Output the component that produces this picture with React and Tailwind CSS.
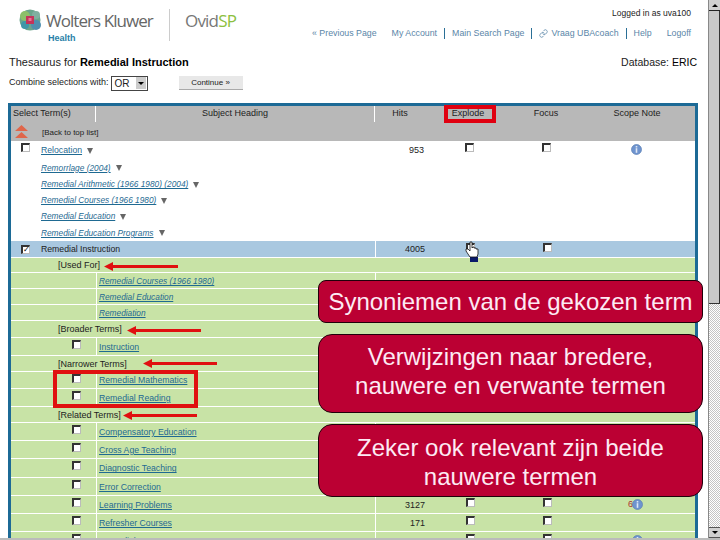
import React from 'react';
import { Link } from 'lucide-react';

const sans = { fontFamily: '"Liberation Sans", Arial, sans-serif' };
const logoFont = { fontFamily: '"Open Sans", sans-serif' };

const Checkbox = ({ checked }) => (
  <span className="inline-flex w-[9px] h-[9px] border-t-2 border-l-2 border-t-[#333] border-l-[#333] border-r border-b border-r-[#bbb] border-b-[#bbb] bg-white items-center justify-center text-[8px] leading-none text-black">
    {checked ? '✓' : null}
  </span>
);

const InfoIcon = () => (
  <svg width="11" height="11" viewBox="0 0 11 11">
    <circle cx="5.5" cy="5.5" r="5" fill="#6f94cf" stroke="#5a7fb5" strokeWidth="0.7" />
    <rect x="4.7" y="2" width="1.6" height="1.5" fill="#dfe8f5" />
    <rect x="4.7" y="4.2" width="1.6" height="4.6" fill="#dfe8f5" />
  </svg>
);

const Triangle = () => (
  <svg width="6" height="6" viewBox="0 0 6 6" className="ml-[5px] inline-block">
    <path d="M0 0 H6 L3 6 Z" fill="#666" />
  </svg>
);

const Arrow = ({ className }) => (
  <svg width="74" height="9" viewBox="0 0 74 9" className={className}>
    <path d="M0 4.5 L9 0 V3 H74 V6 H9 V9 Z" fill="#e01010" />
  </svg>
);

// one row of the thesaurus table: height, look and which cells it has
const rows = [
  { h: 18, bg: 'bg-white', box: true, term: 'Relocation', tri: true, fits: '953', ex: true, fo: true, info: true },
  { h: 17, bg: 'bg-white', term: 'Remorrlage (2004)', em: true, tri: true },
  { h: 16, bg: 'bg-white', term: 'Remedial Arithmetic (1966 1980) (2004)', em: true, tri: true },
  { h: 16, bg: 'bg-white', term: 'Remedial Courses (1966 1980)', em: true, tri: true },
  { h: 16, bg: 'bg-white', term: 'Remedial Education', em: true, tri: true },
  { h: 17, bg: 'bg-white', term: 'Remedial Education Programs', em: true, tri: true },
  { h: 17, bg: 'bg-[#a9c8e0]', box: true, checked: true, term: 'Remedial Instruction', current: true, fits: '4005', ex: true, fo: true, line: true },
  { h: 15, label: '[Used For]' },
  { h: 16, term: 'Remedial Courses (1966 1980)', em: true, indent: true },
  { h: 16, term: 'Remedial Education', em: true, indent: true },
  { h: 16, term: 'Remediation', em: true, indent: true },
  { h: 17, label: '[Broader Terms]' },
  { h: 18, box: true, term: 'Instruction', indent: true },
  { h: 16, label: '[Narrower Terms]' },
  { h: 17, box: true, term: 'Remedial Mathematics', indent: true },
  { h: 18, box: true, term: 'Remedial Reading', indent: true },
  { h: 16, label: '[Related Terms]' },
  { h: 18, box: true, term: 'Compensatory Education', indent: true },
  { h: 18, box: true, term: 'Cross Age Teaching', indent: true },
  { h: 19, box: true, term: 'Diagnostic Teaching', indent: true },
  { h: 18, box: true, term: 'Error Correction', indent: true },
  { h: 18, box: true, term: 'Learning Problems', indent: true, fits: '3127', ex: true, fo: true, info: true, six: true },
  { h: 18, box: true, term: 'Refresher Courses', indent: true, fits: '171', ex: true, fo: true },
  { h: 18, box: true, term: 'Remedial Programs', indent: true, fits: '2172', ex: true, fo: true, info: true },
];

const Row = ({ r }) => {
  const green = !r.bg;
  return (
    <div
      className={`flex border-b border-white shrink-0 text-[9px] ${r.bg || 'bg-[#c8e3a6]'}`}
      style={{ height: r.h }}
    >
      {r.label ? (
        <div className="flex-1 pl-[47px] pt-[2px] flex items-center text-[#222] whitespace-nowrap">{r.label}</div>
      ) : (
        <>
          <div className={`shrink-0 pt-[2px] ${r.indent ? 'w-[85px] pl-[61px]' : 'w-[30px] pl-[10px]'}`}>
            {r.box && <Checkbox checked={r.checked} />}
          </div>
          <div className={`shrink-0 pt-[2px] flex items-center whitespace-nowrap ${r.indent ? 'w-[279px] border-l border-white pl-[2px]' : 'w-[334px]'}`}>
            <span className={`${r.current ? 'text-[#222]' : 'text-[#1f6a92] underline'} ${r.em ? 'italic text-[8.3px]' : 'text-[8.7px]'}`}>
              {r.term}
            </span>
            {r.tri && <Triangle />}
          </div>
          <div className={`flex-1 flex ${green || r.line ? 'border-l border-white' : ''}`}>
            <div className="w-[49px] text-right text-[#222] self-center pt-[2px]">{r.fits}</div>
            <div className="w-[50px] flex justify-end pt-[2px]">{r.ex && <Checkbox />}</div>
            <div className="w-[77px] flex justify-end pt-[2px]">{r.fo && <Checkbox />}</div>
            <div className="w-[91px] flex justify-end items-center">
              {r.six && <span className="text-[#b03030] mr-[-1px]">6</span>}
              {r.info && <InfoIcon />}
            </div>
          </div>
        </>
      )}
    </div>
  );
};

const Logo = () => (
  <svg width="25" height="22" viewBox="0 0 25 22">
    <circle cx="12" cy="11" r="10.5" fill="#6aa58c" />
    <circle cx="7" cy="7" r="5" fill="#8cc06a" />
    <circle cx="18" cy="16" r="5" fill="#4f8fb0" />
    <circle cx="7" cy="16" r="4" fill="#3f97a8" />
    <circle cx="18" cy="6" r="4" fill="#7fb0a0" />
    <rect x="8" y="7" width="8" height="8" fill="#c4345a" />
    <rect x="10.5" y="9" width="3" height="3" fill="#e8739a" />
  </svg>
);

const Hand = () => (
  <svg width="15" height="21" viewBox="0 0 15 21">
    <rect x="5" y="16" width="8" height="5" fill="#0a1a6a" />
    <path
      d="M5 1 H7 V7 L8 6 H9 V7 H11 V8 H13 V13 L12 16 H5 L3 13 L1 10 V8 H3 L5 10 Z"
      fill="#fff"
      stroke="#111"
      strokeWidth="0.8"
    />
  </svg>
);

const Popup = ({ className, children }) => (
  <div
    className={`absolute left-[318px] w-[385px] bg-[#bb0033] border border-[#20000a] text-[#fdeaf4] text-[24px] leading-[29px] text-center flex items-center justify-center ${className}`}
  >
    <div>{children}</div>
  </div>
);

export default function App() {
  return (
    <div className="relative w-[720px] h-[540px] overflow-hidden bg-white flex" style={sans}>
      <div className="w-[708px] shrink-0">
        <div className="h-[48px] flex">
          <div className="pl-[18px] pt-[9px] flex">
            <Logo />
            <div className="ml-[3px] w-[124px] border-r border-[#ccc] h-[32px]">
              <div className="text-[17px] leading-[22px] tracking-[-0.95px] text-[#666] mt-[1px]" style={logoFont}>
                Wolters Kluwer
              </div>
              <div className="text-[9px] font-bold text-[#2a7fa8] leading-[10px] ml-[2px] mt-[1px]">Health</div>
            </div>
            <div className="ml-[15px] text-[17px] leading-[22px] tracking-[-0.8px] text-[#777] mt-[1px]" style={logoFont}>
              Ovid<span className="text-[#8cc040]">SP</span>
            </div>
          </div>
          <div className="flex-1 flex flex-col items-end pr-[17px] text-[9px]">
            <div className="text-[#222] pt-[8px] h-[28px] leading-[10px] text-[8.5px]">Logged in as uva100</div>
            <div className="flex items-center text-[#5a86a8] whitespace-nowrap leading-[11px] text-[8.8px]">
              <span className="mr-[15px]">« Previous Page</span>
              <span className="pr-[7px] border-r border-[#2a6f96]">My Account</span>
              <span className="px-[7px] border-r border-[#2a6f96]">Main Search Page</span>
              <span className="px-[7px] border-r border-[#2a6f96] flex items-center gap-[3px]">
                <Link size={9} />
                Vraag UBAcoach
              </span>
              <span className="pl-[7px]">Help</span>
              <span className="ml-[15px]">Logoff</span>
            </div>
          </div>
        </div>
        <div className="flex justify-between pl-[9px] pr-[11px] h-[26px] pt-[7px] text-[11px] leading-[14px] text-[#222]">
          <div>
            Thesaurus for <span className="font-bold text-black">Remedial Instruction</span>
          </div>
          <div className="text-[10.5px]">
            Database: <span className="text-black">ERIC</span>
          </div>
        </div>
        <div className="flex items-center pl-[9px] h-[18px] text-[9px] text-[#222]">
          <span>Combine selections with:</span>
          <span className="ml-[2px] w-[37px] h-[15px] border border-[#444] bg-white flex justify-between items-center pl-[3px] text-[10px]">
            OR
            <span className="w-[10px] h-[12px] mr-[1px] bg-[#ccc] flex items-center justify-center">
              <span className="w-0 h-0 border-x-[3px] border-x-transparent border-t-[3px] border-t-black"></span>
            </span>
          </span>
          <span className="ml-[31px] w-[64px] h-[14px] bg-[#e8e8e8] border-b border-[#aaa] flex items-center justify-center text-[8px]">
            Continue »
          </span>
        </div>
        <div className="ml-[8px] mt-[11px] w-[690px] border-x-[3px] border-t-[3px] border-[#1c6a96] flex flex-col">
          <div className="bg-[#b8b8b8] text-[9px] text-[#222]">
            <div className="flex h-[16px] items-center">
              <div className="w-[85px] pl-[2px] border-r border-white h-full flex items-center">Select Term(s)</div>
              <div className="w-[279px] border-r border-white h-full flex items-center justify-center">Subject Heading</div>
              <div className="w-[50px] text-center">Hits</div>
              <div className="w-[86px] text-center">Explode</div>
              <div className="w-[70px] text-center">Focus</div>
              <div className="w-[112px] text-center">Scope Note</div>
            </div>
            <div className="flex h-[19px] items-center pl-[4px]">
              <svg width="13" height="14" viewBox="0 0 13 14">
                <path d="M6.5 0 L13 6 H0 Z M6.5 7 L13 13 H0 Z" fill="#e0664a" />
              </svg>
              <span className="ml-[14px] pt-[3px] text-[8px]">[Back to top list]</span>
            </div>
          </div>
          {rows.map((r) => (
            <Row key={r.term + (r.label || '') + r.h} r={r} />
          ))}
        </div>
      </div>

      {/* scrollbar */}
      <div className="w-[12px] h-[538px] flex flex-col bg-[repeating-conic-gradient(#c4c4c4_0_25%,#fff_0_50%)] bg-[length:2px_2px] border-l border-[#888]">
        <div className="h-[11px] bg-[#d0d0d0] border-b border-[#222] flex items-center justify-center">
          <span className="w-0 h-0 border-x-[3px] border-x-transparent border-b-[3px] border-b-black"></span>
        </div>
        <div className="h-[293px] bg-[#c8c8c8] border-b border-r border-[#333]"></div>
        <div className="mt-auto h-[11px] bg-[#d0d0d0] border-y border-[#555] flex items-center justify-center">
          <span className="w-0 h-0 border-x-[3px] border-x-transparent border-t-[3px] border-t-black"></span>
        </div>
      </div>

      {/* overlays from the slide */}
      <div className="absolute left-[444px] top-[105px] w-[52px] h-[18px] border-[4px] border-[#e00010]"></div>
      <div className="absolute left-[53px] top-[370px] w-[145px] h-[38px] border-[4px] border-[#e01010]"></div>
      <Arrow className="absolute left-[104px] top-[262px]" />
      <Arrow className="absolute left-[127px] top-[326px]" />
      <Arrow className="absolute left-[143px] top-[359px]" />
      <Arrow className="absolute left-[123px] top-[411px]" />
      <div className="absolute left-[465px] top-[241px]">
        <Hand />
      </div>
      <Popup className="top-[280px] h-[43px] rounded-[8px]">Synoniemen van de gekozen term</Popup>
      <Popup className="top-[334px] h-[79px] rounded-[14px] pb-[6px]">
        Verwijzingen naar bredere,
        <br />
        nauwere en verwante termen
      </Popup>
      <Popup className="top-[424px] h-[73px] rounded-[14px] pt-[2px]">
        Zeker ook relevant zijn beide
        <br />
        nauwere termen
      </Popup>
      <div className="absolute left-0 right-0 bottom-0 h-[2px] bg-[#bbb]"></div>
    </div>
  );
}
